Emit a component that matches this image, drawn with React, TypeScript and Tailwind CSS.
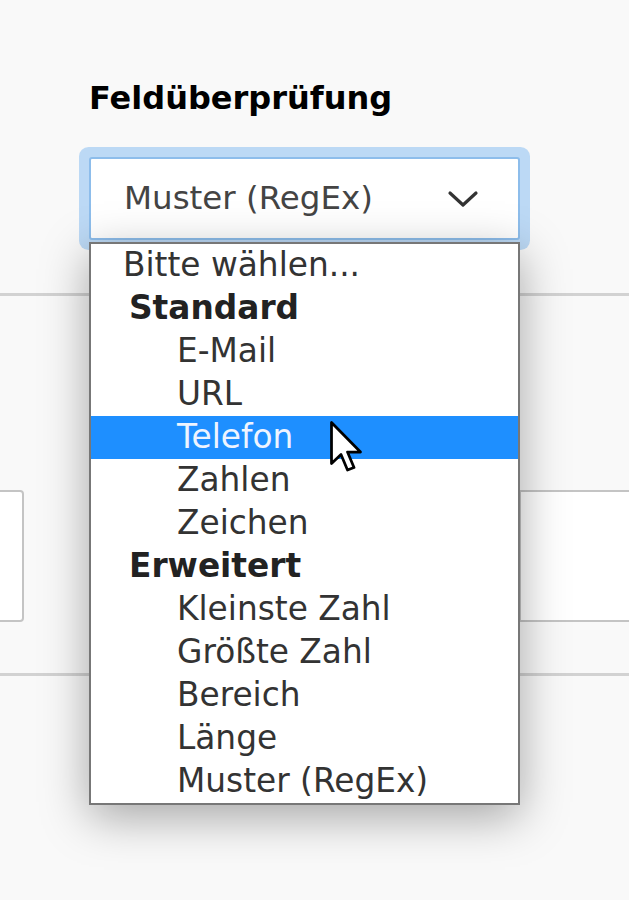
const groups = [
    {
        label: "Standard",
        options: ["E-Mail", "URL", "Telefon", "Zahlen", "Zeichen"],
    },
    {
        label: "Erweitert",
        options: ["Kleinste Zahl", "Größte Zahl", "Bereich", "Länge", "Muster (RegEx)"],
    },
];

const highlighted = "Telefon";

function Chevron() {
    return (
        <svg width="32" height="20" viewBox="0 0 32 20" className="shrink-0">
            <polyline
                points="3,4 16,16 29,4"
                fill="none"
                stroke="#333"
                strokeWidth="3.2"
                strokeLinecap="round"
                strokeLinejoin="round"
            />
        </svg>
    );
}

function Cursor() {
    return (
        <svg
            width="34"
            height="52"
            viewBox="0 0 13.6 20.8"
            className="absolute left-[330px] top-[421px] pointer-events-none"
        >
            <path
                d="M0.6 0.6 V17 L4.4 13.4 L7 19.6 L9.6 18.6 L7 12.4 H12.2 Z"
                fill="#fff"
                stroke="#000"
                strokeWidth="1.1"
                strokeLinejoin="round"
            />
        </svg>
    );
}

function Dropdown() {
    return (
        <div className="absolute left-[89px] top-[242px] w-[431px] border-2 border-[#777] bg-white shadow-[0_12px_44px_rgba(0,0,0,0.34)] text-[32.8px] text-[#333]">
            <div className="h-[43px] leading-[43px] pl-[32px]">Bitte wählen...</div>
            {groups.map((group) => (
                <div key={group.label}>
                    <div className="h-[43px] leading-[43px] pl-[38px] font-bold text-[#222]">
                        {group.label}
                    </div>
                    {group.options.map((option) => (
                        <div
                            key={option}
                            className={
                                option === highlighted
                                    ? "h-[43px] leading-[43px] pl-[86px] bg-[#1e8fff] text-[#eef4ff]"
                                    : "h-[43px] leading-[43px] pl-[86px]"
                            }
                        >
                            {option}
                        </div>
                    ))}
                </div>
            ))}
        </div>
    );
}

export default function App() {
    return (
        <div
            className="relative w-full h-[900px] overflow-hidden bg-[#f9f9f9]"
            style={{ fontFamily: '"DejaVu Sans", Verdana, sans-serif' }}
        >
            <div className="h-[293px] pl-[89px] pt-[78px]">
                <h3 className="text-[32px] leading-[40px] font-bold text-black">
                    Feldüberprüfung
                </h3>

                <div className="mt-[39px] w-[431px] h-[83px] rounded-[3px] border-2 border-[#8dbdeb] bg-white shadow-[0_0_0_10px_#bcd9f5] flex items-center justify-between pl-[33px] pr-[39px]">
                    <span className="text-[32.5px] text-[#444]">Muster (RegEx)</span>
                    <Chevron />
                </div>
            </div>

            <div className="h-[3px] bg-[#d2d2d2]" />

            <div className="h-[194px]" />

            <div className="flex justify-between h-[132px]">
                <div className="w-[24px] bg-white border-2 border-l-0 border-[#c4c4c4] rounded-r-[4px]" />
                <div className="w-[110px] bg-white border-2 border-r-0 border-[#c4c4c4]" />
            </div>

            <div className="h-[51px]" />

            <div className="h-[3px] bg-[#d2d2d2]" />

            <Dropdown />
            <Cursor />
        </div>
    );
}
